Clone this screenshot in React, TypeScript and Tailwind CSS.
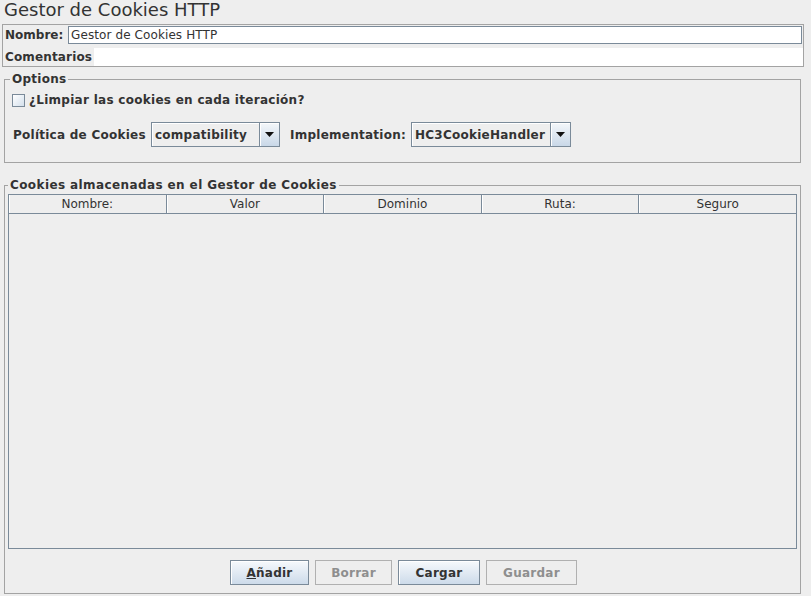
import React from "react";

const Arrow = () => (
  <svg width="9" height="5" viewBox="0 0 9 5">
    <path d="M0 0 H9 L4.5 5 Z" fill="#111" />
  </svg>
);

function Combo({ value, width }: { value: string; width: string }) {
  return (
    <div className={`${width} h-[25px] flex border border-[#7a8a99] bg-[#eeeeee]`}>
      <div className="flex-1 flex items-center pl-[3px] font-bold tracking-[0.25px] text-[#333] shadow-[inset_1px_1px_0_#ffffff]">
        {value}
      </div>
      <div className="w-[20px] flex items-center justify-center border-l border-[#7a8a99] bg-gradient-to-b from-[#f4f7fa] to-[#c9d8e8] shadow-[inset_1px_1px_0_#ffffff]">
        <Arrow />
      </div>
    </div>
  );
}

function Btn({ children, enabled, width }: { children: React.ReactNode; enabled: boolean; width: string }) {
  return enabled ? (
    <div className={`${width} h-[25px] flex items-center justify-center border border-[#7a8a99] bg-gradient-to-b from-[#f6f9fc] to-[#cddbea] font-bold tracking-[0.25px] text-[#333] shadow-[inset_1px_1px_0_#ffffff]`}>
      {children}
    </div>
  ) : (
    <div className={`${width} h-[25px] flex items-center justify-center border border-[#b0b0b0] bg-[#eeeeee] font-bold tracking-[0.25px] text-[#8e8e8e]`}>
      {children}
    </div>
  );
}

export default function App() {
  const cols = ["Nombre:", "Valor", "Dominio", "Ruta:", "Seguro"];
  return (
    <div className="w-[811px] h-[596px] bg-[#eeeeee] font-['DejaVu_Sans',sans-serif] text-[12px] text-[#333] flex flex-col overflow-hidden">
      <div className="h-[24px] pl-[4px] text-[18px] leading-[20px] text-[#333]">Gestor de Cookies HTTP</div>

      {/* Name panel */}
      <div className="ml-[2px] w-[802px] h-[43px] border border-[#a3a3a3] flex flex-col">
        <div className="mt-[1px] h-[18px] flex items-center">
          <div className="w-[65px] pl-[2px] font-bold">Nombre:</div>
          <div className="flex-1 mr-[1px] h-[18px] border border-[#7a8a99] bg-white flex items-center pl-[2px] tracking-[0.1px]">
            Gestor de Cookies HTTP
          </div>
        </div>
        <div className="mt-[3px] h-[19px] flex items-center">
          <div className="w-[91px] pl-[2px] font-bold tracking-[0.15px]">Comentarios</div>
          <div className="flex-1 h-[18px] bg-white" />
        </div>
      </div>

      {/* Options */}
      <fieldset className="mt-[5px] ml-[4px] w-[797px] border border-[#a3a3a3]">
        <legend className="ml-[5px] px-[2px] font-bold tracking-[0.25px] leading-[14px]">Options</legend>
        <div className="pt-[4px] pb-[15px]">
          <div className="h-[20px] flex items-center">
            <div className="ml-[7px] w-[13px] h-[13px] border border-[#7a8a99] bg-gradient-to-br from-[#ffffff] to-[#d4e0ec]" />
            <div className="ml-[4px] font-bold tracking-[0.28px]">¿Limpiar las cookies en cada iteración?</div>
          </div>
          <div className="mt-[12px] h-[25px] flex items-center">
            <div className="ml-[8px] w-[138px] font-bold tracking-[0.25px]">Política de Cookies</div>
            <Combo value="compatibility" width="w-[129px]" />
            <div className="ml-[10px] w-[121px] font-bold tracking-[0.25px]">Implementation:</div>
            <Combo value="HC3CookieHandler" width="w-[160px]" />
          </div>
        </div>
      </fieldset>

      {/* Cookies table */}
      <fieldset className="mt-[15px] ml-[4px] w-[797px] border border-[#a3a3a3]">
        <legend className="ml-[3px] px-[2px] font-bold tracking-[0.4px] leading-[14px]">
          Cookies almacenadas en el Gestor de Cookies
        </legend>
        <div className="pl-[3px] pr-[3px] pt-[2px]">
          <div className="h-[355px] border-l border-b border-r border-[#7a8a99] flex flex-col">
            <div className="flex h-[20px] border-t border-[#7a8a99]">
              {cols.map((c, i) => (
                <div
                  key={c}
                  className={`flex-1 flex items-center justify-center border-b border-[#7a8a99] shadow-[inset_1px_0_0_#ffffff] ${
                    i < cols.length - 1 ? "border-r" : ""
                  }`}
                >
                  {c}
                </div>
              ))}
            </div>
            <div className="flex-1" />
          </div>
          <div className="h-[44px] flex items-start justify-center gap-[6px] pt-[11px] pl-[2px]">
            <Btn enabled width="w-[79px]">
              <span>
                <span className="underline">A</span>ñadir
              </span>
            </Btn>
            <Btn enabled={false} width="w-[77px]">Borrar</Btn>
            <Btn enabled width="w-[82px]">Cargar</Btn>
            <Btn enabled={false} width="w-[91px]">Guardar</Btn>
          </div>
        </div>
      </fieldset>
    </div>
  );
}
